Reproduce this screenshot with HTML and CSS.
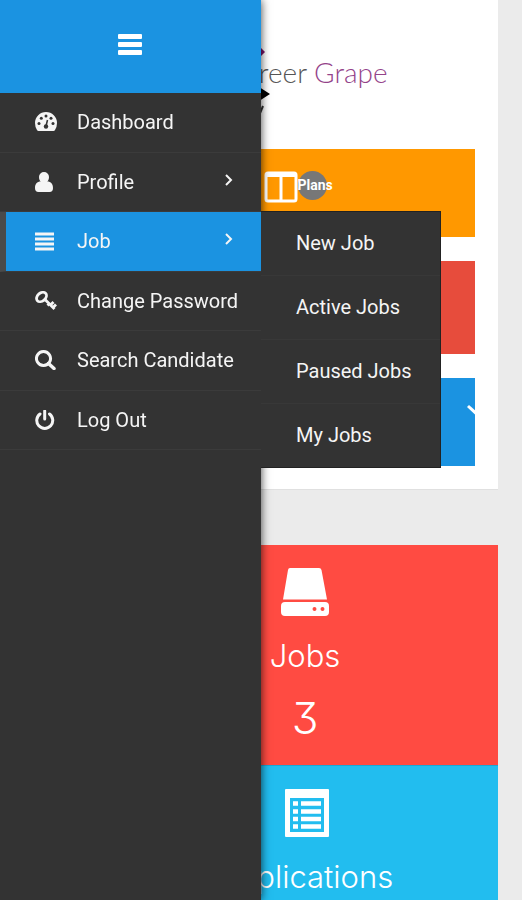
FILE: index.html
```html
<!DOCTYPE html>
<html lang="en">
<head>
<meta charset="utf-8">
<meta name="viewport" content="width=device-width, initial-scale=1">
<title>Career Grape</title>
<link rel="stylesheet" href="styles.css">
</head>
<body>
<main class="content">
  <section class="panel">
    <div class="logo">
      <svg class="logo-mark" viewBox="0 0 40 80" aria-hidden="true">
        <path d="M10 9 18 1l8 8-8 8z" fill="#7b1367"/>
        <path d="M17 42l14 9-14 9 5-9z" fill="#000"/>
        <path d="M24 63 19 75" stroke="#333" stroke-width="2"/>
      </svg>
      <span class="logo-text">Career <span class="logo-accent">Grape</span></span>
    </div>
    <div class="tiles">
      <div class="tile tile-plans">
        <svg class="tile-icon" viewBox="0 0 34 32" aria-hidden="true">
          <rect x="2" y="2" width="30" height="28" rx="2" fill="none" stroke="#fff" stroke-width="3"/>
          <path d="M2 4h30" stroke="#fff" stroke-width="4"/>
          <path d="M17 4v26" stroke="#fff" stroke-width="3"/>
        </svg>
        <span class="badge">Plans</span>
      </div>
      <div class="tile tile-red"></div>
      <div class="tile tile-blue">
        <svg class="tile-check" viewBox="0 0 8 12" aria-hidden="true"><path d="M1 2 12 12" stroke="#fff" stroke-width="3"/></svg>
      </div>
    </div>
  </section>
  <section class="stats">
    <article class="stat stat-jobs">
      <svg class="stat-icon" viewBox="0 0 48 48" aria-hidden="true">
        <path fill="#fff" d="M9 0h29q2 0 2.500 2L46 31.500H2L7 2Q7.300 0 9 0z"/>
        <path fill="#fff" fill-rule="evenodd" d="M4 34h40q4 0 4 4v6q0 4-4 4H4q-4 0-4-4v-6q0-4 4-4zM33.500 39a2 2 0 1 0 .01 4 2 2 0 1 0-.01-4zM41.500 39a2 2 0 1 0 .01 4 2 2 0 1 0-.01-4z"/>
      </svg>
      <h2 class="stat-title">Jobs</h2>
      <p class="stat-value">3</p>
    </article>
    <article class="stat stat-apps">
      <svg class="stat-icon" viewBox="0 0 48 48" aria-hidden="true">
        <path fill="#fff" fill-rule="evenodd" d="M5 0h42q1 0 1 1v46q0 1-1 1H5q-1 0-1-1V1q0-1 1-1zM9 9v34h34V9z"/>
        <path stroke="#fff" stroke-width="4.500" d="M12 14.500h5M20 14.500h20M12 22.500h5M20 22.500h20M12 30h5M20 30h20M12 37.500h5M20 37.500h20"/>
      </svg>
      <h2 class="stat-title">Applications</h2>
    </article>
  </section>
</main>

<aside class="sidebar">
  <button class="toggle" type="button" aria-label="Toggle menu">
    <svg viewBox="0 0 24 22" aria-hidden="true"><g fill="#fff"><rect width="24" height="5" rx="1"/><rect y="8" width="24" height="5" rx="1"/><rect y="16" width="24" height="5" rx="1"/></g></svg>
  </button>
  <nav aria-label="Main">
    <ul class="menu">
      <li class="item"><a class="link" href="#dashboard">
        <svg class="icon" viewBox="0 0 22 20" aria-hidden="true">
          <path fill="currentColor" d="M11 0a11 11 0 0 1 11 11q0 4-2 7-.5 1-1.500 1h-15q-1 0-1.500-1-2-3-2-7A11 11 0 0 1 11 0z"/>
          <g fill="#333"><circle cx="4" cy="11.500" r="1.500"/><circle cx="6.300" cy="6.300" r="1.500"/><circle cx="11" cy="4" r="1.500"/><circle cx="16" cy="6.300" r="1.500"/><circle cx="18" cy="11.500" r="1.500"/><circle cx="11" cy="14.500" r="2.200"/></g>
          <path d="M11 14 12.500 8" stroke="#333" stroke-width="1.500"/>
        </svg>Dashboard</a></li>
      <li class="item"><a class="link" href="#profile">
        <svg class="icon" viewBox="0 0 22 20" aria-hidden="true"><path fill="currentColor" d="M9 0a5 5 0 0 1 5 5c0 2-.7 3.500-1.700 4.500C16 9.500 18 12 18 16q0 4-3.500 4h-11Q0 20 0 16c0-4 2-6.500 5.700-6.500C4.700 8.500 4 7 4 5a5 5 0 0 1 5-5z"/></svg>Profile
        <svg class="chevron" viewBox="0 0 8 12" aria-hidden="true"><path d="M1 1l5 5-5 5"/></svg></a></li>
      <li class="item item-active"><a class="link" href="#job">
        <svg class="icon" viewBox="0 0 22 20" aria-hidden="true"><path d="M0 3h19M0 8h19M0 13h19M0 18h19" stroke="currentColor" stroke-width="3"/></svg>Job
        <svg class="chevron" viewBox="0 0 8 12" aria-hidden="true"><path d="M1 1l5 5-5 5"/></svg></a>
        <ul class="submenu">
          <li><a href="#new">New Job</a></li>
          <li><a href="#active">Active Jobs</a></li>
          <li><a href="#paused">Paused Jobs</a></li>
          <li><a href="#mine">My Jobs</a></li>
        </ul>
      </li>
      <li class="item"><a class="link" href="#password">
        <svg class="icon" viewBox="0 0 22 20" aria-hidden="true"><g fill="none" stroke="currentColor"><ellipse cx="6.500" cy="6" rx="5.500" ry="4" transform="rotate(-40 6.500 6)" stroke-width="2.800"/><path d="M10 8.500 19.500 18M14 13l-1.500 1.500M15.500 14l3-3M18 16.500l3-3" stroke-width="2.800"/></g></svg>Change Password</a></li>
      <li class="item"><a class="link" href="#search">
        <svg class="icon" viewBox="0 0 22 20" aria-hidden="true"><path fill="none" stroke="currentColor" stroke-width="3" d="M8.500 1.500a7 7 0 1 0 .01 0z"/><path d="m13.500 13.500 5.500 5" stroke="currentColor" stroke-width="3.500" stroke-linecap="round"/></svg>Search Candidate</a></li>
      <li class="item"><a class="link" href="#logout">
        <svg class="icon" viewBox="0 0 22 20" aria-hidden="true"><path fill="none" stroke="currentColor" stroke-width="3" stroke-linecap="round" d="M5 4a8 8 0 1 0 9.500 0M9.700 1v8"/></svg>Log Out</a></li>
    </ul>
  </nav>
</aside>
</body>
</html>
```
FILE: styles.css
```css
* {
  box-sizing: border-box;
}

body {
  margin: 0;
  height: 100vh;
  overflow: hidden;
  background: #ebebeb;
  font-family: Roboto, sans-serif;
}

ul {
  list-style: none;
  margin: 0;
  padding: 0;
}

a {
  color: inherit;
  text-decoration: none;
}

.content {
  margin: 0 24px 0 112px;
}

.panel {
  padding: 0 23px 23px;
  background: #fff;
  border-bottom: 1px solid #e0e0e0;
}

.logo {
  position: relative;
  display: flex;
  align-items: center;
  justify-content: center;
  height: 149px;
  padding: 0 0 6px 4px;
}

.logo-mark {
  position: absolute;
  left: 50%;
  top: 43px;
  width: 40px;
  margin-left: -66px;
}

.logo-text {
  color: #555;
  font-family: Lato, sans-serif;
  font-size: 28px;
  font-weight: 300;
}

.logo-accent {
  color: #94438a;
}

.tiles {
  display: grid;
  gap: 24px;
}

.tile {
  display: flex;
  align-items: center;
  justify-content: center;
  height: 88px;
  overflow: hidden;
}

.tile-plans {
  padding: 0 20px 12px 0;
  background: #ff9800;
}

.tile-red {
  height: 93px;
  background: #e74c3c;
}

.tile-blue {
  justify-content: flex-end;
  padding-bottom: 24px;
  background: #1b93e1;
}

.tile-icon {
  width: 34px;
}

.tile-check {
  width: 8px;
}

.badge {
  display: flex;
  align-items: center;
  width: 29px;
  height: 29px;
  margin-bottom: 4px;
  border-radius: 50%;
  background: #777;
  color: #fff;
  font-size: 14px;
  font-weight: 700;
}

.stats {
  margin-top: 55px;
}

.stat {
  display: flex;
  flex-direction: column;
  align-items: center;
  height: 220px;
  padding-top: 23px;
  color: #fff;
  font-family: Inter, sans-serif;
}

.stat-jobs {
  background: #ff4b42;
}

.stat-apps {
  background: #22bdef;
  border-top: 1px solid #1ba6d4;
}

.stat-icon {
  width: 48px;
  height: 48px;
}

.stat-title {
  margin: 22px 0 0;
  font-size: 31px;
  font-weight: 300;
  line-height: 36px;
}

.stat-value {
  margin: 18px 0 0;
  font-size: 44px;
  font-weight: 300;
  font-feature-settings: "cv09";
  line-height: 52px;
}

.sidebar {
  position: fixed;
  inset: 0 auto 0 0;
  width: 50%;
  background: #333;
  box-shadow: 0 0 9px rgba(0, 0, 0, 0.75);
  color: #f5f5f5;
}

.toggle {
  display: flex;
  align-items: center;
  justify-content: center;
  width: 100%;
  height: 93px;
  padding: 0 1px 4px 0;
  border: 0;
  background: #1b93e1;
}

.toggle svg {
  width: 24px;
}

.menu {
  display: grid;
  grid-template-columns: minmax(0, 1fr);
  grid-template-rows: repeat(6, 1fr);
  height: 357px;
}

.item {
  position: relative;
  border-bottom: 1px solid #3b3b3b;
}

.link {
  display: flex;
  align-items: center;
  height: 100%;
  padding: 0 28px 0 35px;
  font-size: 20px;
  white-space: nowrap;
}

.icon {
  flex: none;
  width: 22px;
  height: 20px;
  margin-right: 20px;
}

.chevron {
  width: 8px;
  margin-left: auto;
  margin-bottom: 4px;
  fill: none;
  stroke: currentColor;
  stroke-width: 2;
}

.item-active {
  border-left: 6px solid #4a4a4a;
  background: #1b93e1;
}

.item-active .link {
  padding-left: 29px;
}

.submenu {
  position: absolute;
  left: 100%;
  top: -1px;
  border: 1px solid #222;
  border-left: 0;
  background: #333;
}

.submenu a {
  display: block;
  padding: 0 28px 0 35px;
  font-size: 20px;
  line-height: 63px;
  white-space: nowrap;
}

.submenu li + li {
  border-top: 1px solid #383838;
}
```
